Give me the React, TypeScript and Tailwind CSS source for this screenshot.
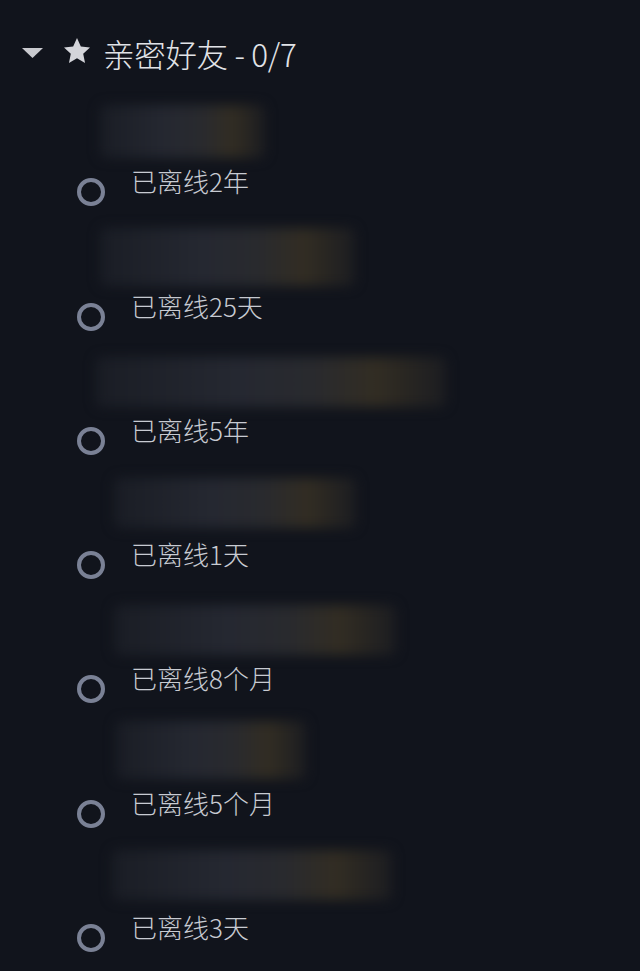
import React from 'react';

const friends = [
  { id: 1, status: '已离线2年', box: 'ml-[100px] w-[165px] mt-[5px] h-[53px]' },
  { id: 2, status: '已离线25天', box: 'ml-[100px] w-[255px] mt-[4px] h-[58px]' },
  { id: 3, status: '已离线5年', box: 'ml-[96px] w-[350px] mt-[8px] h-[50px]' },
  { id: 4, status: '已离线1天', box: 'ml-[114px] w-[242px] mt-[5px] h-[50px]' },
  { id: 5, status: '已离线8个月', box: 'ml-[114px] w-[282px] mt-[8px] h-[50px]' },
  { id: 6, status: '已离线5个月', box: 'ml-[116px] w-[190px] mt-[0px] h-[58px]' },
  { id: 7, status: '已离线3天', box: 'ml-[112px] w-[280px] mt-[4px] h-[50px]' },
];

const App = () => {
  return (
    <div
      className="w-[640px] h-[971px] overflow-hidden bg-[#11141c]"
      style={{ fontFamily: '"Microsoft YaHei", "Noto Sans CJK SC", "Noto Sans", sans-serif' }}
    >
      {/* Group header */}
      <header className="flex items-center h-[40px] mt-[33px]">
        <svg className="ml-[22px] w-[21px] h-[10px]" viewBox="0 0 21 10">
          <path d="M0 0 L21 0 L10.5 10 Z" fill="#c9cacf" />
        </svg>
        <svg className="ml-[21px] w-[26px] h-[25px] -mt-[6px]" viewBox="1.5 1.5 21 20">
          <path
            d="M12 1.5 L15.1 8.3 L22.5 9.1 L17 14.1 L18.5 21.5 L12 17.8 L5.5 21.5 L7 14.1 L1.5 9.1 L8.9 8.3 Z"
            fill="#d4d5da"
          />
        </svg>
        <h1 className="ml-[13px] text-[31.5px] leading-[38px] font-light text-[#e1e3e7] tracking-[-0.3px]">亲密好友 - 0/7</h1>
      </header>

      {/* Friend list */}
      <div className="mt-[27px]">
        {friends.map((f) => (
          <div key={f.id} className="h-[124.3px] flex flex-col">
            <div
              className={`${f.box} rounded-md blur-[6px] bg-[linear-gradient(90deg,#1a1d25_0%,#252831_40%,#292a2e_62%,#322d23_80%,#1c1d21_100%)]`}
            />
            <div className="flex-1" />
            <div className="flex items-start h-[58px]">
              <div className="ml-[77px] mt-[12px] w-[28px] h-[28px] rounded-full border-[4px] border-[#7a8195]" />
              <span className="ml-[26px] text-[26px] leading-[30px] font-light text-[#c8cbd2]">{f.status}</span>
            </div>
          </div>
        ))}
      </div>
    </div>
  );
};

export default App;
